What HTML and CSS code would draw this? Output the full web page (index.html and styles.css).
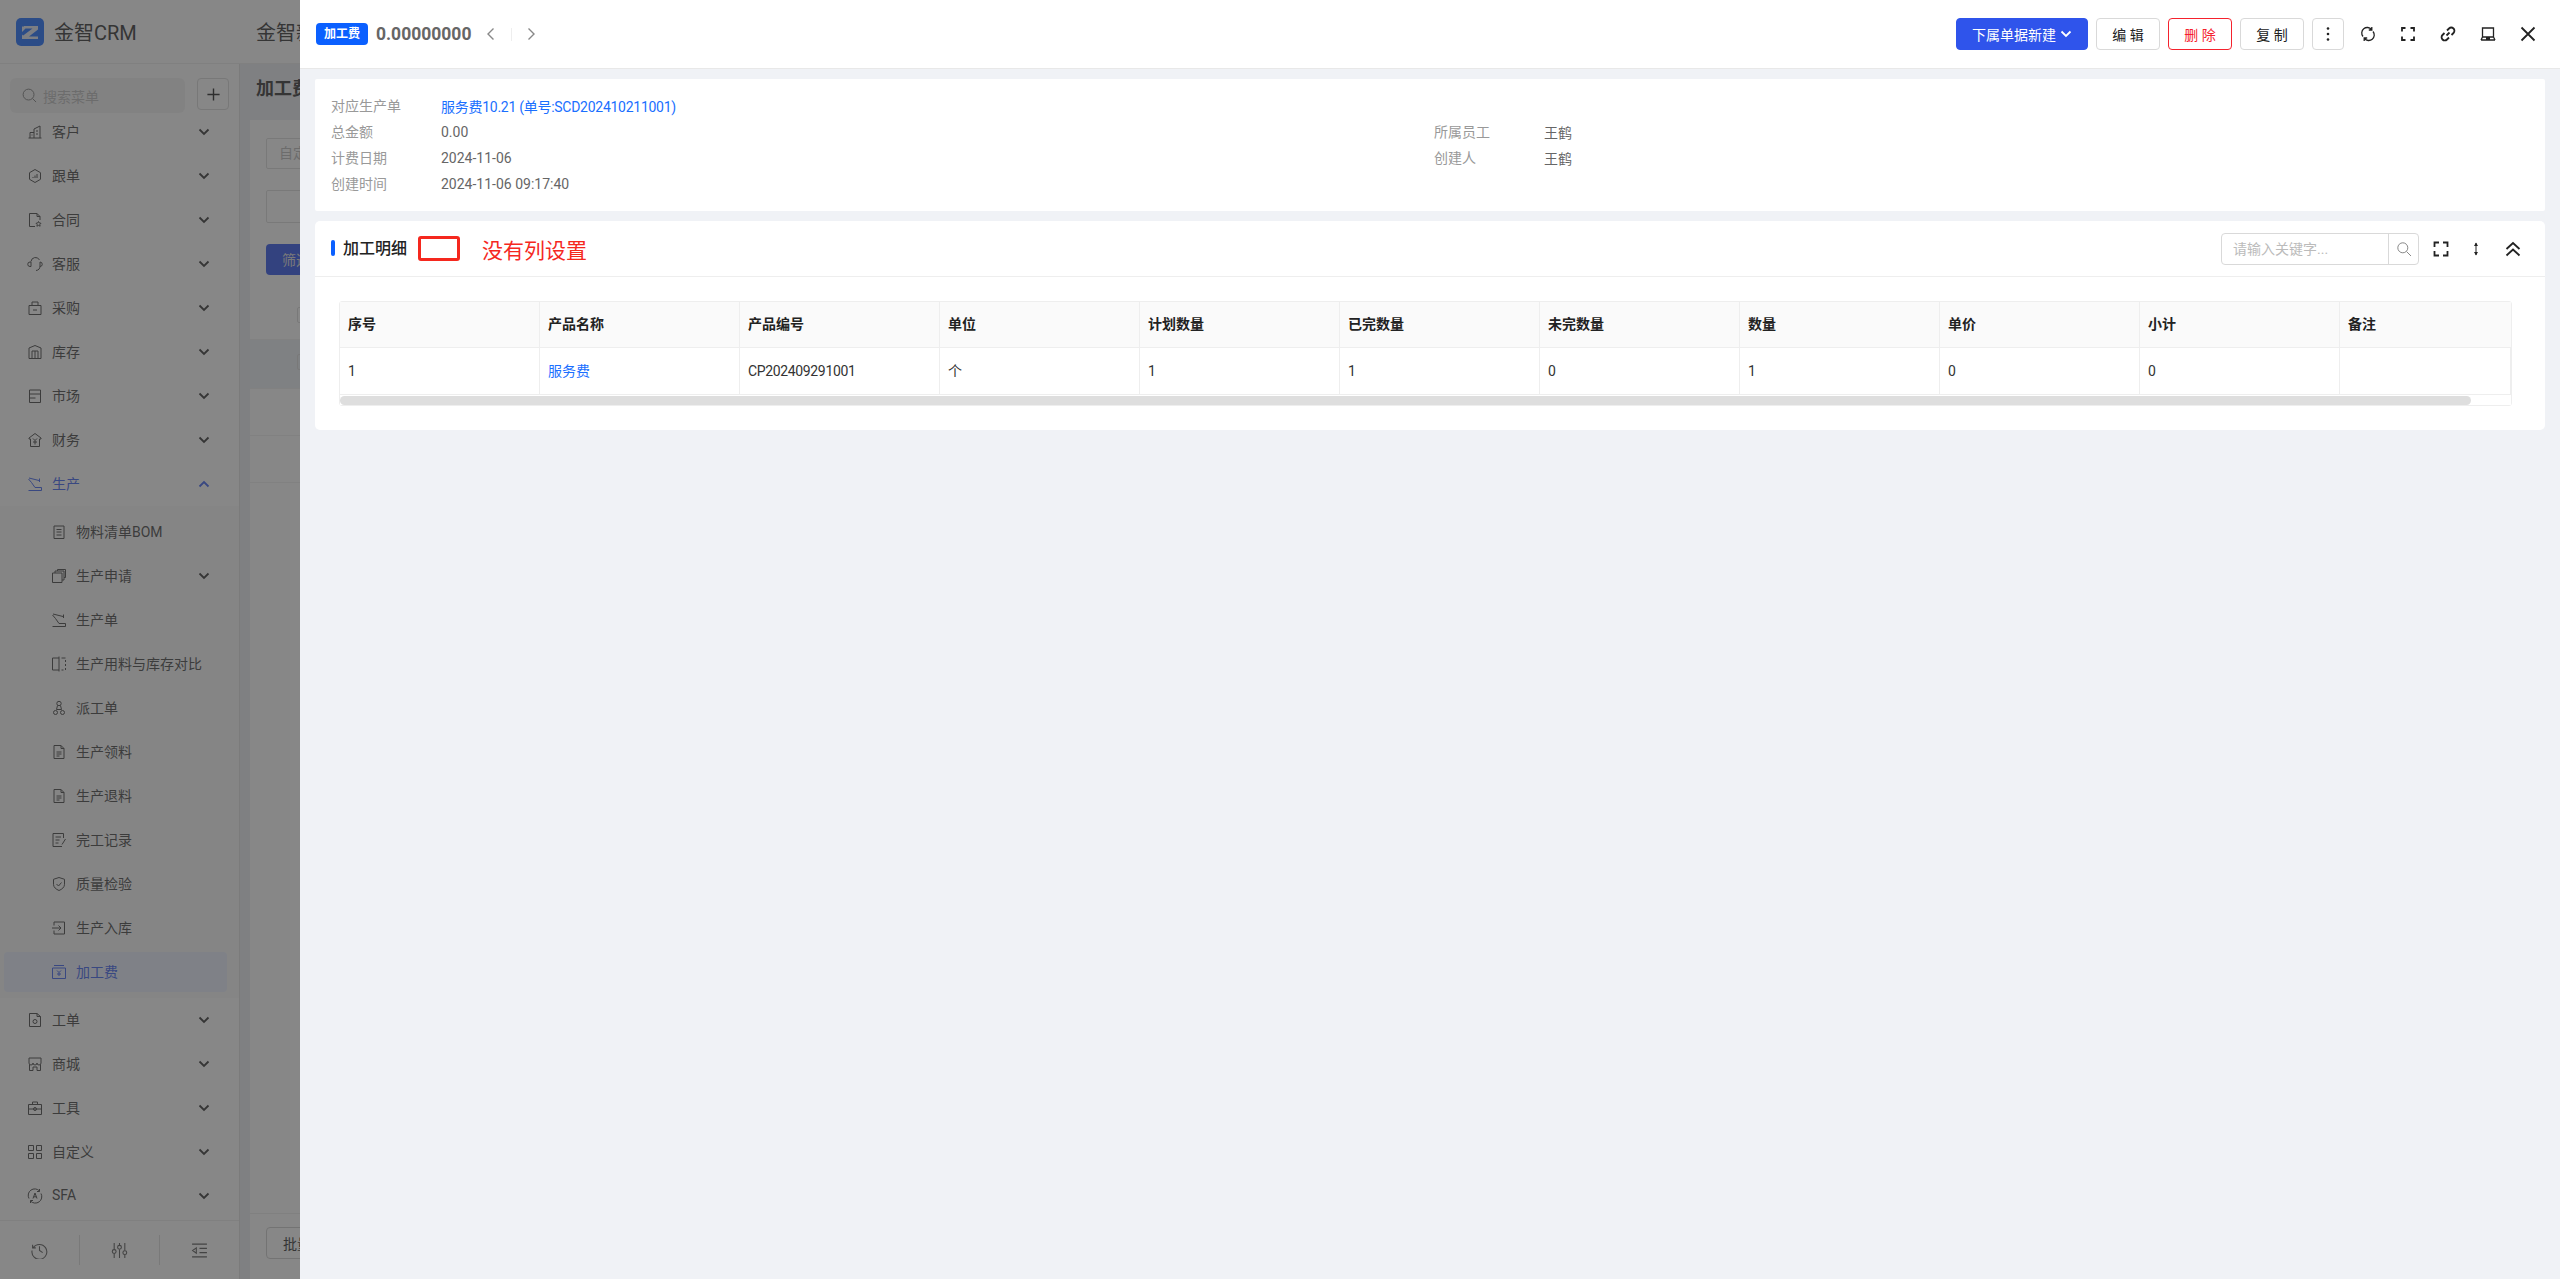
FILE: index.html
```html
<!DOCTYPE html>
<html lang="zh-CN">
<head>
    <meta charset="UTF-8">
    <meta name="viewport" content="width=device-width, initial-scale=1.0">
    <title>加工费 - 金智CRM</title>
    <link rel="stylesheet" href="styles.css">
</head>
<body>
    <svg class="sprite" aria-hidden="true">
        <symbol id="down" viewBox="0 0 12 12"><path d="M1.5 3.5L6 8l4.5-4.5"/></symbol>
        <symbol id="up" viewBox="0 0 12 12"><path d="M1.5 8.5L6 4l4.5 4.5"/></symbol>
        <symbol id="arm" viewBox="0 0 16 16"><path d="M1.5 14.5h13v-3H8L4.5 6.5M1.5 3l3 3.500M2 2l10 2.500M12.500 2.500v3.500"/></symbol>
        <symbol id="doc" viewBox="0 0 16 16"><path d="M10 1.500H3v13h10V4.500zM10 1.500v3h3M5.500 8h5M5.500 10h5M5.500 12h3"/></symbol>
    </svg>

    <div class="app">
        <header class="top-bar">
            <div class="brand">
                <svg class="logo" viewBox="0 0 28 28"><rect width="28" height="28" rx="5" class="logo-bg"/><path class="logo-mark" d="M6 8.500h5.500L6 14zM8 8h14v3.500L13 18.500h9V21H6.500v-3l10-7.500H8zM10.500 21H6v-4.500z"/></svg>
                <span class="brand-name">金智CRM</span>
            </div>
            <div class="company">金智新</div>
        </header>

        <aside class="sidebar">
            <div class="menu-search">
                <div class="search-box">
                    <svg class="ic ic-15" viewBox="0 0 16 16"><circle cx="7" cy="7" r="5.800"/><path d="M11.300 11.300L15 15"/></svg>
                    <span>搜索菜单</span>
                </div>
                <div class="add-btn">
                    <svg class="ic ic-15" viewBox="0 0 16 16"><path d="M8 1.500v13M1.500 8h13"/></svg>
                </div>
            </div>

            <nav class="menu">
                <div class="menu-item">
                    <svg class="ic" viewBox="0 0 16 16"><path d="M1.500 14h13M3 14V8.500h4M7 14V5l6-3v12M9 7h2M9 10h2M4.500 11h1"/></svg>
                    <span>客户</span><svg class="arrow"><use href="#down"/></svg>
                </div>
                <div class="menu-item">
                    <svg class="ic" viewBox="0 0 16 16"><path d="M8 1.500l5.500 3.200v6.600L8 14.500l-5.500-3.200V4.700zM6 10V9M8 10V7.500M10 10V6"/></svg>
                    <span>跟单</span><svg class="arrow"><use href="#down"/></svg>
                </div>
                <div class="menu-item">
                    <svg class="ic" viewBox="0 0 16 16"><path d="M8 14.500H2.500v-13H10l3 3v3.500M10 1.500v3h3M11.500 9.500l.8 1.500 1.700.3-1.200 1.200.3 1.700-1.600-.8-1.600.8.3-1.700-1.200-1.200 1.700-.3z"/></svg>
                    <span>合同</span><svg class="arrow"><use href="#down"/></svg>
                </div>
                <div class="menu-item">
                    <svg class="ic" viewBox="0 0 16 16"><path d="M4 5.500a4.500 4.500 0 0 1 8.500-1.500M13 6v4a4.500 4.500 0 0 1-4 4.500M4 6v4.500H3a2 2 0 0 1 0-4.500zM13 6a2.200 2.200 0 0 1 0 4.500"/></svg>
                    <span>客服</span><svg class="arrow"><use href="#down"/></svg>
                </div>
                <div class="menu-item">
                    <svg class="ic" viewBox="0 0 16 16"><path d="M2 5.500h12v9H2zM5 5.500V2h6v3.500M6 10h4"/></svg>
                    <span>采购</span><svg class="arrow"><use href="#down"/></svg>
                </div>
                <div class="menu-item">
                    <svg class="ic" viewBox="0 0 16 16"><path d="M2 14.500V4l6-2.500L14 4v10.500zM5 14.500V7h6v7.500M8 7v7.500"/></svg>
                    <span>库存</span><svg class="arrow"><use href="#down"/></svg>
                </div>
                <div class="menu-item">
                    <svg class="ic" viewBox="0 0 16 16"><path d="M2.500 2h11v12.500h-11zM2.500 6h11M2.500 10h6"/></svg>
                    <span>市场</span><svg class="arrow"><use href="#down"/></svg>
                </div>
                <div class="menu-item">
                    <svg class="ic" viewBox="0 0 16 16"><path d="M8 1.500L14 6v1h-1.500v7.500h-9V7H2V6zM6 6.500l2 2 2-2M8 8.500v4M6 10h4"/></svg>
                    <span>财务</span><svg class="arrow"><use href="#down"/></svg>
                </div>
                <div class="menu-item open">
                    <svg class="ic"><use href="#arm"/></svg>
                    <span>生产</span><svg class="arrow"><use href="#up"/></svg>
                </div>

                <div class="submenu">
                    <div class="sub-item">
                        <svg class="ic" viewBox="0 0 16 16"><path d="M3 2h10v12.500H3zM5.500 5.500h5M5.500 8h5M5.500 11h5"/></svg>
                        <span>物料清单BOM</span>
                    </div>
                    <div class="sub-item">
                        <svg class="ic" viewBox="0 0 16 16"><path d="M1.500 5h9.500v9.500H1.500zM4 5V3h9v9h-2M6.500 3V1.500h8v8H13"/></svg>
                        <span>生产申请</span><svg class="arrow"><use href="#down"/></svg>
                    </div>
                    <div class="sub-item">
                        <svg class="ic"><use href="#arm"/></svg>
                        <span>生产单</span>
                    </div>
                    <div class="sub-item">
                        <svg class="ic" viewBox="0 0 16 16"><path d="M8 2H1.500v12H8M8 .500v15M10.500 2H14.500M14.500 4v2M14.500 8v2M14.500 12v2M10.500 14h2"/></svg>
                        <span>生产用料与库存对比</span>
                    </div>
                    <div class="sub-item">
                        <svg class="ic" viewBox="0 0 16 16"><circle cx="8" cy="3.500" r="2.200"/><path d="M5.500 9.500h5M6.500 5.500L5.500 9.500M9.500 5.500l1 4"/><circle cx="4.500" cy="12.500" r="2"/><circle cx="11.500" cy="12.500" r="2"/></svg>
                        <span>派工单</span>
                    </div>
                    <div class="sub-item">
                        <svg class="ic"><use href="#doc"/></svg>
                        <span>生产领料</span>
                    </div>
                    <div class="sub-item">
                        <svg class="ic"><use href="#doc"/></svg>
                        <span>生产退料</span>
                    </div>
                    <div class="sub-item">
                        <svg class="ic" viewBox="0 0 16 16"><path d="M11 14.500H2V1.500h10.500V6M4.500 5h5.500M4.500 8h4M4.500 11h3M14.500 7L11 12.500"/></svg>
                        <span>完工记录</span>
                    </div>
                    <div class="sub-item">
                        <svg class="ic" viewBox="0 0 16 16"><path d="M8 1.500l5.500 1.800v5c0 3-2.500 5-5.500 6.200-3-1.200-5.500-3.200-5.500-6.200v-5zM5.500 8L7.500 10l3-3.500"/></svg>
                        <span>质量检验</span>
                    </div>
                    <div class="sub-item">
                        <svg class="ic" viewBox="0 0 16 16"><path d="M3 5.500V2h10.500v12H3v-3.500M1 8h9M7.500 5.500L10 8l-2.500 2.500"/></svg>
                        <span>生产入库</span>
                    </div>
                    <div class="sub-item active">
                        <svg class="ic" viewBox="0 0 16 16"><path d="M1.500 4h13v10.500h-13zM3 1.500h10M6 6.500l2 2 2-2M8 8.500v3.500M6 10h4"/></svg>
                        <span>加工费</span>
                    </div>
                </div>

                <div class="menu-item">
                    <svg class="ic" viewBox="0 0 16 16"><path d="M10 1.500H2.500v13h11v-10zM10 1.500v3h3.500"/><circle cx="8" cy="9.500" r="2"/></svg>
                    <span>工单</span><svg class="arrow"><use href="#down"/></svg>
                </div>
                <div class="menu-item">
                    <svg class="ic" viewBox="0 0 16 16"><path d="M2 2h12v5a2 2 0 0 1-4 0 2 2 0 0 1-4 0 2 2 0 0 1-4 0zM2.500 8.500v6h3.500V11h4v3.500h3.500v-6"/></svg>
                    <span>商城</span><svg class="arrow"><use href="#down"/></svg>
                </div>
                <div class="menu-item">
                    <svg class="ic" viewBox="0 0 16 16"><path d="M1.500 4.500h13v10h-13zM5.500 4.500V2h5v2.500M1.500 9h13"/><circle cx="8" cy="9" r="1.500"/></svg>
                    <span>工具</span><svg class="arrow"><use href="#down"/></svg>
                </div>
                <div class="menu-item">
                    <svg class="ic" viewBox="0 0 16 16"><path d="M1.500 1.500h5v5h-5zM9.500 1.500h5v5h-5zM1.500 9.500h5v5h-5zM9.500 9.500h5v5h-5z"/></svg>
                    <span>自定义</span><svg class="arrow"><use href="#down"/></svg>
                </div>
                <div class="menu-item">
                    <svg class="ic" viewBox="0 0 16 16"><path d="M2 10.500A6.500 6.500 0 0 1 12.500 3M14 5.500A6.500 6.500 0 0 1 3.500 13M12.500 1v2.500H10M3.500 15v-2.500H6M6 10.500L8 5l2 5.500M6.800 8.800h2.400"/></svg>
                    <span>SFA</span><svg class="arrow"><use href="#down"/></svg>
                </div>
            </nav>

            <div class="side-foot">
                <div class="foot-cell">
                    <svg class="ic ic-17" viewBox="0 0 16 16"><path d="M1.500 2.500v3h3M2 5.500A7 7 0 1 1 1 8M8 4v4l3 2"/></svg>
                </div>
                <div class="foot-cell">
                    <svg class="ic ic-17" viewBox="0 0 16 16"><path d="M3 1v6M3 11v4M8 1v2M8 7v8M13 1v7M13 12v3"/><circle cx="3" cy="9" r="1.800"/><circle cx="8" cy="5" r="1.800"/><circle cx="13" cy="10" r="1.800"/></svg>
                </div>
                <div class="foot-cell">
                    <svg class="ic ic-17" viewBox="0 0 16 16"><path d="M1 2h14M8 6h7M8 10h7M1 14h14M5 5.500L1.500 8 5 10.500z"/></svg>
                </div>
            </div>
        </aside>

        <main class="page">
            <h2 class="page-title">加工费</h2>
            <section class="filter-card">
                <div class="field">自定义</div>
                <div class="field field-tall"></div>
                <button class="filter-btn">筛选</button>
            </section>
            <section class="list-card">
                <div class="list-row"><i class="check"></i></div>
                <div class="list-row current"><i class="check"></i></div>
                <div class="list-row"></div>
                <div class="list-row"></div>
                <div class="list-spacer"></div>
                <div class="list-foot"><button class="batch-btn">批量</button></div>
            </section>
        </main>
    </div>

    <div class="mask"></div>

    <div class="drawer">
        <div class="drawer-head">
            <span class="tag">加工费</span>
            <span class="doc-no">0.00000000</span>
            <svg class="ic pager" viewBox="0 0 16 16"><path d="M10.500 2.500L5 8l5.500 5.500"/></svg>
            <i class="pager-sep"></i>
            <svg class="ic pager" viewBox="0 0 16 16"><path d="M5.500 2.500L11 8l-5.500 5.500"/></svg>

            <div class="head-actions">
                <button class="btn btn-primary">下属单据新建<svg class="btn-arrow"><use href="#down"/></svg></button>
                <button class="btn btn-plain">编 辑</button>
                <button class="btn btn-plain btn-danger">删 除</button>
                <button class="btn btn-plain">复 制</button>
                <button class="btn btn-more"><svg viewBox="0 0 4 16" class="dots"><circle cx="2" cy="2.500" r="1.300"/><circle cx="2" cy="8" r="1.300"/><circle cx="2" cy="13.500" r="1.300"/></svg></button>
                <div class="tool"><svg class="ic ic-mid" viewBox="0 0 16 16"><path d="M3 10.500A5.500 5.500 0 0 1 11.500 3.500M13 5.500a5.500 5.500 0 0 1-8.500 7M11.800 1v3h-3M4.200 15v-3h3"/></svg></div>
                <div class="tool"><svg class="ic ic-bold" viewBox="0 0 16 16"><path d="M2 5.500V2h3.500M10.500 2H14v3.500M14 10.500V14h-3.500M5.500 14H2v-3.500"/></svg></div>
                <div class="tool"><svg class="ic ic-bold" viewBox="0 0 16 16"><path d="M6.500 9.500l3-3M7 4.500l2-2a3 3 0 0 1 4.500 4.500l-2 2M9 11.500l-2 2A3 3 0 0 1 2.500 9l2-2"/></svg></div>
                <div class="tool"><svg class="ic ic-mid" viewBox="0 0 16 16"><path d="M2.500 2h11v9h-11zM1 14h14M2.500 11L1 14M13.500 11l1.500 3M6 12.500h4"/></svg></div>
                <div class="tool"><svg class="ic ic-bold" viewBox="0 0 16 16"><path d="M1.500 1.500l13 13M14.500 1.500l-13 13"/></svg></div>
            </div>
        </div>

        <div class="drawer-body">
            <section class="card info-card">
                <div class="info-line"><span class="info-label">对应生产单</span><a class="link link-long">服务费10.21 (单号:SCD202410211001)</a></div>
                <div class="info-line">
                    <div class="info-cell"><span class="info-label">总金额</span><span>0.00</span></div>
                    <div class="info-cell"><span class="info-label">所属员工</span><span>王鹤</span></div>
                </div>
                <div class="info-line">
                    <div class="info-cell"><span class="info-label">计费日期</span><span>2024-11-06</span></div>
                    <div class="info-cell"><span class="info-label">创建人</span><span>王鹤</span></div>
                </div>
                <div class="info-line"><span class="info-label">创建时间</span><span>2024-11-06 09:17:40</span></div>
            </section>

            <section class="card detail-card">
                <div class="detail-head">
                    <span class="detail-title">加工明细</span>
                    <i class="red-box"></i>
                    <span class="red-note">没有列设置</span>
                    <div class="detail-tools">
                        <div class="kw-search">
                            <span class="kw-input">请输入关键字...</span>
                            <span class="kw-btn"><svg class="ic" viewBox="0 0 16 16"><circle cx="6.800" cy="6.800" r="5"/><path d="M10.500 10.500L15 15"/></svg></span>
                        </div>
                        <svg class="ic ic-bold" viewBox="0 0 16 16"><path d="M1.500 6V1.500H6M10 1.500h4.500V6M14.500 10v4.500H10M6 14.500H1.500V10"/></svg>
                        <svg class="ic" viewBox="0 0 16 16"><path d="M8 2v12"/><path class="sort-head" d="M6 5l2-3.500L10 5zM6 11l2 3.500 2-3.500z"/></svg>
                        <svg class="ic ic-bold icon-collapse" viewBox="0 0 16 16"><path d="M1.500 8l6.500-6 6.500 6M1.500 14.500L8 8.500l6.500 6"/></svg>
                    </div>
                </div>

                <div class="table-wrap">
                    <table class="grid">
                        <thead>
                            <tr>
                                <th>序号</th><th>产品名称</th><th>产品编号</th><th>单位</th><th>计划数量</th><th>已完数量</th><th>未完数量</th><th>数量</th><th>单价</th><th>小计</th><th>备注</th>
                            </tr>
                        </thead>
                        <tbody>
                            <tr>
                                <td>1</td><td class="cn-cell"><a class="link">服务费</a></td><td class="code">CP202409291001</td><td class="cn-cell">个</td><td>1</td><td>1</td><td>0</td><td>1</td><td>0</td><td>0</td><td></td>
                            </tr>
                        </tbody>
                    </table>
                    <div class="h-scroll"><div class="h-thumb"></div></div>
                </div>
            </section>
        </div>
    </div>
</body>
</html>
```
FILE: styles.css
```css
* { box-sizing: border-box; }
html, body { height: 100%; }
body {
    margin: 0;
    overflow: hidden;
    font-family: Roboto, "Noto Sans CJK SC", sans-serif;
    font-size: 14px;
    color: #333;
    background: #fff;
}
.sprite { display: none; }
.ic {
    width: 16px;
    height: 16px;
    flex: none;
    fill: none;
    stroke: currentColor;
    stroke-width: 1;
}
.ic-15 { width: 15px; height: 15px; }
.ic-17 { width: 17px; height: 17px; }
.ic-mid { stroke-width: 1.300; }
.ic-bold { stroke-width: 1.800; }

/* page behind the drawer */
.app {
    height: 100%;
    display: grid;
    grid-template-columns: 240px 1fr;
    grid-template-rows: 64px 1fr;
    background: #eceef3;
}
.top-bar {
    grid-column: 1 / 3;
    display: flex;
    align-items: center;
    background: #fff;
    border-bottom: 1px solid #eee;
}
.brand {
    width: 256px;
    padding-left: 16px;
    display: flex;
    align-items: center;
    gap: 10px;
}
.logo { width: 28px; height: 28px; }
.logo-bg { fill: #1a6cff; }
.logo-mark { fill: #e4e8f5; }
.brand-name { font-size: 20px; color: #333; }
.company { font-size: 20px; color: #333; }

.sidebar {
    display: flex;
    flex-direction: column;
    background: #fff;
    border-right: 1px solid #e0e0e0;
    min-height: 0;
}
.menu-search {
    display: flex;
    gap: 12px;
    padding: 14px 10px 0;
    margin-bottom: -3px;
    position: relative;
}
.search-box {
    width: 175px;
    height: 35px;
    padding-left: 12px;
    display: flex;
    align-items: center;
    gap: 6px;
    border-radius: 6px;
    background: #f3f3f3;
    color: #bbb;
}
.search-box .ic { color: #777; }
.add-btn {
    width: 32px;
    height: 32px;
    display: flex;
    align-items: center;
    justify-content: center;
    border: 1px solid #d9d9d9;
    border-radius: 4px;
    color: #222;
}
.add-btn .ic { stroke-width: 1.500; }
.menu { flex: 1; overflow: hidden; }
.menu-item, .sub-item {
    position: relative;
    height: 44px;
    display: flex;
    align-items: center;
    color: #444;
}
.menu-item span, .sub-item span { padding-bottom: 2px; }
.menu-item { padding-left: 27px; gap: 9px; }
.menu-item.open { color: #3d62f0; }
.submenu { padding: 4px 0; background: #fbfbfb; }
.sub-item { padding-left: 51px; gap: 9px; }
.sub-item.active { color: #3d62f0; }
.sub-item.active::before {
    content: "";
    position: absolute;
    left: 4px;
    right: 12px;
    top: 2px;
    bottom: 2px;
    border-radius: 4px;
    background: #ebf1ff;
}
.sub-item > * { position: relative; }
.sub-item > .arrow { position: absolute; }
.arrow {
    position: absolute;
    left: 198px;
    top: 16px;
    width: 12px;
    height: 12px;
    fill: none;
    stroke: #333;
    stroke-width: 1.800;
}
.open .arrow { stroke: #3d62f0; }
.side-foot {
    height: 59px;
    display: flex;
    align-items: center;
    border-top: 1px solid #eee;
}
.foot-cell {
    flex: 1;
    height: 30px;
    display: flex;
    align-items: center;
    justify-content: center;
    border-right: 1px solid #ddd;
    color: #555;
}
.foot-cell:last-child { border-right: none; }

.page {
    padding-left: 10px;
    display: flex;
    flex-direction: column;
    min-height: 0;
}
.page-title {
    margin: 0;
    height: 56px;
    padding-left: 6px;
    line-height: 50px;
    font-size: 18px;
    color: #333;
}
.filter-card {
    height: 173px;
    padding: 18px 16px;
    background: #fff;
    display: flex;
    flex-direction: column;
    align-items: flex-start;
}
.field {
    width: 180px;
    height: 31px;
    padding-left: 12px;
    line-height: 29px;
    border: 1px solid #ddd;
    border-radius: 2px;
    color: #bbb;
    margin-bottom: 21px;
}
.field-tall { height: 33px; }
.filter-btn, .batch-btn {
    padding: 0 16px;
    border-radius: 4px;
    font: inherit;
}
.filter-btn {
    width: 100px;
    height: 32px;
    border: none;
    text-align: left;
    background: #2f54eb;
    color: #ddd;
}
.list-card {
    flex: 1;
    display: flex;
    flex-direction: column;
    background: #fff;
}
.list-row {
    height: 47px;
    padding: 14px 47px;
    border-bottom: 1px solid #f0f0f0;
}
.list-row.current { height: 49px; background: #ebeff4; }
.check {
    display: block;
    width: 16px;
    height: 16px;
    border: 1px solid #ddd;
    border-radius: 2px;
}
.list-spacer { flex: 1; }
.list-foot {
    height: 66px;
    padding: 13px 16px;
    border-top: 1px solid #eee;
}
.batch-btn {
    width: 100px;
    height: 32px;
    border: 1px solid #ccc;
    text-align: left;
    background: #fff;
    color: #333;
}

.mask {
    position: fixed;
    inset: 0;
    background: rgba(55, 55, 55, 0.6);
}

/* drawer */
.drawer {
    position: fixed;
    top: 0;
    right: 0;
    bottom: 0;
    width: 2260px;
    display: flex;
    flex-direction: column;
    background: #f0f2f6;
}
.drawer-head {
    height: 69px;
    padding: 0 16px;
    display: flex;
    align-items: center;
    background: #fff;
    border-bottom: 1px solid #e8e8e8;
}
.tag {
    height: 22px;
    width: 52px;
    text-align: center;
    line-height: 22px;
    border-radius: 4px;
    background: #0b60ff;
    color: #fff;
    font-size: 12px;
    font-weight: 700;
}
.doc-no {
    margin-left: 8px;
    font-size: 17.500px;
    font-weight: 700;
    color: #666;
}
.pager { color: #888; margin-left: 12px; stroke-width: 1.400; }
.pager-sep {
    width: 1px;
    height: 13px;
    margin: 0 -1px 0 12px;
    background: #eee;
}
.head-actions {
    margin-left: auto;
    display: flex;
    align-items: center;
    gap: 8px;
}
.btn {
    height: 32px;
    padding: 0;
    border: 1px solid #d9d9d9;
    border-radius: 4px;
    background: #fff;
    color: #222;
    font: inherit;
    display: flex;
    align-items: center;
    justify-content: center;
}
.btn-primary {
    width: 132px;
    border-color: #2f54eb;
    background: #2f54eb;
    color: #fff;
}
.btn-arrow {
    width: 12px;
    height: 12px;
    margin-left: 4px;
    fill: none;
    stroke: #fff;
    stroke-width: 1.800;
}
.btn-plain { width: 64px; }
.btn-danger {
    border-color: #f5222d;
    color: #f5222d;
}
.btn-more { width: 32px; }
.dots { width: 4px; height: 16px; fill: #222; }
.tool {
    width: 32px;
    display: flex;
    justify-content: center;
    color: #222;
}
.drawer-body {
    flex: 1;
    padding: 10px 15px;
    display: flex;
    flex-direction: column;
    gap: 10px;
}
.card { background: #fff; border-radius: 2px; }
.info-card { padding: 14px 16px; color: #666; }
.info-line {
    height: 26px;
    display: flex;
    align-items: center;
}
.info-cell {
    width: 1103px;
    flex: none;
    display: flex;
    align-items: center;
}
.info-label {
    width: 110px;
    flex: none;
    padding-bottom: 2px;
    color: #999;
}
.link { color: #1a6fff; }
.link-long { letter-spacing: -0.27px; }

.detail-card { height: 209px; border-radius: 5px; }
.detail-head {
    height: 56px;
    padding: 0 16px;
    display: flex;
    align-items: center;
    border-bottom: 1px solid #eee;
}
.detail-title {
    padding-left: 12px;
    padding-bottom: 4px;
    position: relative;
    font-size: 16px;
    font-weight: 500;
    color: #222;
}
.detail-title::before {
    content: "";
    position: absolute;
    left: 0;
    top: 5px;
    width: 4px;
    height: 16px;
    border-radius: 2px;
    background: #0b60ff;
}
.red-box {
    width: 42px;
    height: 25px;
    margin-left: 11px;
    border: 3px solid #f5281e;
    border-radius: 3px;
}
.red-note {
    margin-left: 22px;
    font-size: 21px;
    color: #f5281e;
}
.detail-tools {
    margin-left: auto;
    display: flex;
    align-items: center;
    gap: 19px;
    padding-right: 8px;
    color: #222;
}
.kw-search {
    width: 198px;
    height: 32px;
    margin-right: -5px;
    display: flex;
    border: 1px solid #d9d9d9;
    border-radius: 4px;
}
.kw-input {
    flex: 1;
    padding-left: 11px;
    line-height: 30px;
    color: #bbb;
}
.kw-btn {
    width: 30px;
    display: flex;
    align-items: center;
    justify-content: center;
    border-left: 1px solid #d9d9d9;
    color: #888;
}
.sort-head { fill: #222; stroke: none; }
.icon-collapse { margin-left: 2px; }

.table-wrap {
    margin: 24px 33px 0 24px;
    border: 1px solid #eee;
    border-radius: 3px;
    background: #f7f7f7;
}
.grid {
    width: 100%;
    table-layout: fixed;
    border-collapse: separate;
    border-spacing: 0;
}
.grid th, .grid td {
    width: 200px;
    height: 47px;
    padding: 0 8px;
    text-align: left;
    font-size: 14px;
    font-weight: 400;
    color: #333;
    border-right: 1px solid #eee;
    border-bottom: 1px solid #eee;
}
.grid th {
    height: 46px;
    padding-bottom: 3px;
    font-weight: 700;
    color: #222;
    background: #fafafa;
}
.grid td { background: #fff; }
.grid td.cn-cell { padding-bottom: 2px; }
.grid td.code { letter-spacing: -0.35px; }
.grid th:last-child { border-right: none; }
.grid th:last-child, .grid td:last-child { width: auto; }
.h-scroll {
    height: 10px;
    padding-top: 1px;
    background: #fff;
}
.h-thumb {
    width: 2131px;
    height: 9px;
    border-radius: 5px;
    background: #dedede;
}
```
